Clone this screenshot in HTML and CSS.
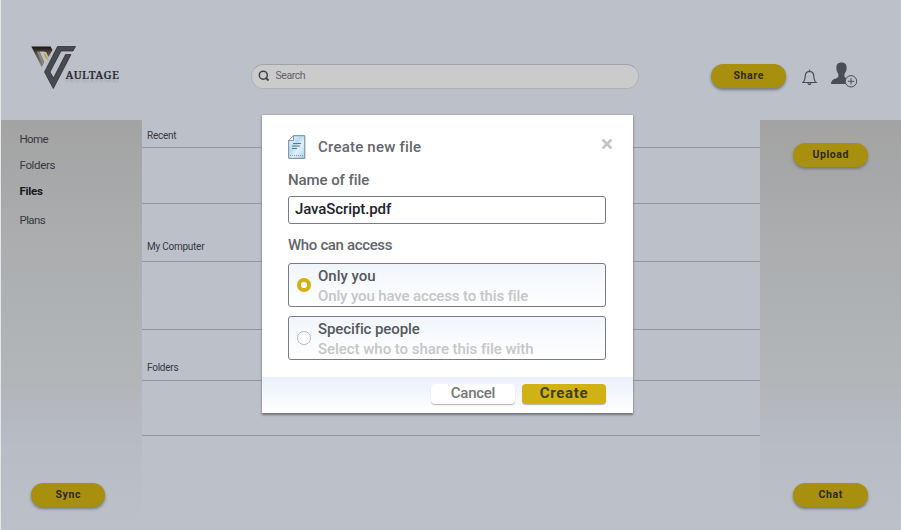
FILE: index.html
```html
<!DOCTYPE html>
<html lang="en">
<head>
<meta charset="utf-8">
<title>Vaultage</title>
<link rel="stylesheet" href="styles.css">
</head>
<body>
<div class="page">
  <header class="header">
    <div class="brand">
      <svg class="logo" viewBox="0 0 46 44" width="46" height="44">
        <defs><linearGradient id="g" x1="0" y1="0" x2="0" y2="1"><stop offset="0" stop-color="#17130f"/><stop offset=".35" stop-color="#5d5149"/><stop offset="1" stop-color="#8d857e"/></linearGradient></defs>
        <path d="M.3 .5H19.500L21.500 4 17.500 11 15 6 12.500 5.500 8.500 5.500 13 16.500 10.800 21.500Z" fill="url(#g)"/>
        <path d="M8.500 5.500 13.200 15.500 11.500 18.500 5.800 5.500Z" fill="#8d847d"/>
        <path d="M12.500 6 16 10 17.300 15 14 11Z" fill="#c4a52c"/>
        <path d="M26.500 .5H44.500L42 5H30L19 26 22.500 32 34.500 8.500H40L22.300 42.500 13.500 26Z" fill="#484a50" stroke="#24262b" stroke-width=".7"/>
      </svg>
      <span class="wordmark">AULTAGE</span>
    </div>
    <div class="search">
      <svg width="12" height="12" viewBox="0 0 12 12"><circle cx="5.300" cy="5.200" r="4" fill="none" stroke="#3e4148" stroke-width="1.500"/><path d="M7.500 7.500 10.500 10.500" stroke="#3e4148" stroke-width="1.800"/></svg>
      <span class="search-text">Search</span>
    </div>
    <button class="pill share">Share</button>
    <svg class="bell" width="16" height="17" viewBox="0 0 16 17" fill="none" stroke="#4b4e55" stroke-width="1.200"><path d="M1 13.500C2.800 12 3 10 3.300 6.500 3.500 4 5 2.500 7.500 2.300 10 2.500 11.500 4 11.700 6.500 12 10 12.200 12 14 13.500ZM7.500 2.300V.8"/><path d="M5.800 14.200Q7.500 17.200 9.200 14.200" fill="#777b82"/></svg>
    <svg class="user" width="27" height="26" viewBox="0 0 27 26"><path d="M10.500 .5C14 .5 16 2.500 15.600 6.500 15.500 9.500 14.200 10.500 13.500 12 13.300 15 13.500 15.500 16.500 16.500Q14.200 19 15 22H0C.3 17.500 3 17.200 6 16 7.500 15.300 7.500 14 7.300 12 6 10 5.500 8.500 5.400 6.500 5 2.500 7 .5 10.500 .5Z" fill="#4b4e54"/><circle cx="20" cy="19.300" r="5.700" fill="#bcc1c9" stroke="#4b4e54" stroke-width="1"/><path d="M16.800 19.300H23.200M20 16.100V22.500" stroke="#4b4e54" stroke-width="1"/></svg>
  </header>

  <div class="body">
    <aside class="side">
      <nav class="nav">
        <span class="home">Home</span>
        <span class="folders">Folders</span>
        <span class="active">Files</span>
        <span class="plans">Plans</span>
      </nav>
      <button class="pill sync">Sync</button>
    </aside>
    <main class="main">
      <section class="label r1">Recent</section>
      <section class="row r2"></section>
      <section class="label r3">My Computer</section>
      <section class="row r4"></section>
      <section class="label r5">Folders</section>
      <section class="row r6"></section>
    </main>
    <aside class="side right">
      <button class="pill upload">Upload</button>
      <button class="pill chat">Chat</button>
    </aside>
  </div>

  <div class="modal">
    <div class="content">
      <div class="title-row">
        <svg class="doc" width="18" height="24" viewBox="0 0 18 24"><defs><linearGradient id="p" x1="0" y1="0" x2="1" y2="1"><stop offset="0" stop-color="#f4faff"/><stop offset=".4" stop-color="#b9dbf2"/><stop offset=".6" stop-color="#e0f1fc"/><stop offset="1" stop-color="#a9d0eb"/></linearGradient></defs><path d="M5.500 .7H16.800V23.300H.7V5.500Z" fill="url(#p)" stroke="#77828d"/><path d="M5.500 .7V5.500H.7Z" fill="#fff" stroke="#77828d" stroke-width=".8"/><path d="M5 8.500H13M4 11H12M4 13.500H9" stroke="#637383" stroke-width="1.100"/><path d="M2 20.500H16" stroke="#7f95a6" stroke-dasharray="1 1"/></svg>
        <h1 class="t title">Create new file</h1>
        <svg class="close" width="12" height="10" viewBox="0 0 12 10"><path d="M1.500 .5 10.500 9.500M10.500 .5 1.500 9.500" stroke="#c3c3c3" stroke-width="2.600"/></svg>
      </div>
      <div class="t field-label name">Name of file</div>
      <div class="t input">JavaScript.pdf</div>
      <div class="t field-label who">Who can access</div>
      <div class="option">
        <span class="radio on"></span>
        <div><div class="t opt-title only">Only you</div><div class="t hint hint-a">Only you have access to this file</div></div>
      </div>
      <div class="option">
        <span class="radio"></span>
        <div><div class="t opt-title specific">Specific people</div><div class="t hint hint-b">Select who to share this file with</div></div>
      </div>
    </div>
    <footer class="footer">
      <button class="btn cancel">Cancel</button>
      <button class="btn create">Create</button>
    </footer>
  </div>
</div>
</body>
</html>
```
FILE: styles.css
```css
* { box-sizing: border-box; }
body { margin: 0; background: #e4e6e9; font-family: Roboto, "Noto Sans", sans-serif; color: #36393f; }
button { border: 0; padding: 0; font-family: inherit; }
svg { display: block; flex: none; }
.page { position: relative; width: 901px; height: 530px; overflow: hidden; padding-left: 1px; background: linear-gradient(90deg, #e4e6e9 1px, #bcc1c9 1px); }
.header { height: 119.500px; display: flex; align-items: flex-start; }
.brand { display: flex; width: 249.500px; padding: 45.500px 0 0 30px; }
.wordmark { font: 500 11px/16px "Noto Serif", "Liberation Serif", serif; letter-spacing: .45px; color: #22242b; margin: 21px 0 0 -11.500px; text-shadow: 0 3px 2px #a0a4ac; -webkit-text-stroke: .2px #22242b; }
.search { width: 388.500px; height: 25px; margin-top: 63.500px; border-radius: 13px; background: #cbcbcb; border: 1px solid #afb2b5; border-top-color: #9fa3a9; display: flex; align-items: center; padding-left: 6px; gap: 6px; }
.search-text { font-size: 10.500px; line-height: 20px; margin-top: -1px; color: #60636a; letter-spacing: -.45px; }
.pill { width: 74.500px; height: 24px; border-radius: 12px; background: #a88f0d; box-shadow: 0 2px 3px #747982; color: #2d2a20; font-size: 10.500px; line-height: 22px; padding: 1px 0 1px 1px; font-weight: 700; text-align: center; letter-spacing: .6px; flex: none; }
.share { margin: 64px 0 0 72px; }
.bell { margin: 68.500px 0 0 16.500px; }
.user { margin: 62px 0 0 13px; }
.body { display: flex; height: 410.500px; }
.side { width: 141px; flex: none; background: linear-gradient(#a3a3a3 0%, #abadaf 30%, #b3b6b9 65%, #b7bcc5 80%, #bcc1c9 100%); display: flex; flex-direction: column; }
.nav { display: flex; flex-direction: column; padding-left: 18.500px; height: 363.500px; padding-top: 10px; font-size: 11.500px; line-height: 18px; }
.home { letter-spacing: -.6px; margin-bottom: 8px; }
.folders { letter-spacing: -.35px; margin-bottom: 8px; }
.active { font-weight: 700; color: #151923; letter-spacing: -.3px; margin-bottom: 11px; }
.plans { letter-spacing: -.6px; }
.sync { margin-left: 29.500px; }
.main { width: 618px; flex: none; }
.label, .row { border-bottom: 1px solid #92979e; }
.label { padding-left: 5px; font-size: 10px; line-height: 14px; letter-spacing: -.25px; }
.r1 { height: 28px; padding-top: 9px; }
.r2 { height: 56px; }
.r3 { height: 58.500px; padding-top: 36px; }
.r4 { height: 67.500px; }
.r5 { height: 51px; padding-top: 31px; }
.r6 { height: 55px; }
.right { align-items: flex-start; padding-left: 33px; }
.upload { margin-top: 23.500px; }
.chat { margin-top: 316px; }

.modal { position: absolute; left: 262px; top: 115px; width: 370.500px; height: 297.500px; background: #fff; box-shadow: 0 2px 2px #71757b, 0 0 2px #92969c; display: flex; flex-direction: column; }
.content { height: 262px; padding: 20px 26.500px 0 26px; }
.t { font-weight: 500; color: #63666b; font-size: 15px; line-height: 20px; margin: 0; white-space: nowrap; }
.title-row { display: flex; height: 34px; }
.title { margin: 2px 0 0 12px; letter-spacing: .22px; }
.close { margin: 4px -7px 0 auto; }
.name { margin-top: 1px; letter-spacing: -.08px; }
.input { margin-top: 5.500px; height: 28.500px; border: 1.500px solid #777b82; border-radius: 3px; padding: 2px 6px; color: #22222f; letter-spacing: -.1px; }
.who { margin-top: 11px; margin-bottom: 8px; letter-spacing: -.35px; }
.option { height: 44px; margin-bottom: 9px; border: 1.500px solid #777b82; border-radius: 3px; background: linear-gradient(#f1f5fc, #fff); display: flex; align-items: flex-start; padding-left: 8px; gap: 7.500px; padding-top: 2px; }
.radio { width: 13.500px; height: 13.500px; border-radius: 50%; border: 1px solid #b4b4b4; background: #fff; margin-top: 12px; flex: none; }
.radio.on { border: 4px solid #d0b214; }
.opt-title { color: #55585d; }
.specific { letter-spacing: -.1px; }
.hint { color: #c5c6c8; }
.hint-a { letter-spacing: -.13px; }
.hint-b { letter-spacing: -.04px; }
.footer { height: 35.500px; background: linear-gradient(#eaf0fb, #fff); display: flex; justify-content: flex-end; gap: 7px; padding: 7px 26.500px 0 0; }
.btn { width: 84px; height: 20px; border-radius: 4px; font-size: 15px; line-height: 18px; padding-bottom: 2px; box-shadow: 0 1px 1px #b5b5b5; }
.cancel { background: #fff; color: #777; font-weight: 500; letter-spacing: -.25px; }
.create { background: #d0b214; color: #41401f; font-weight: 700; letter-spacing: .65px; }
```
